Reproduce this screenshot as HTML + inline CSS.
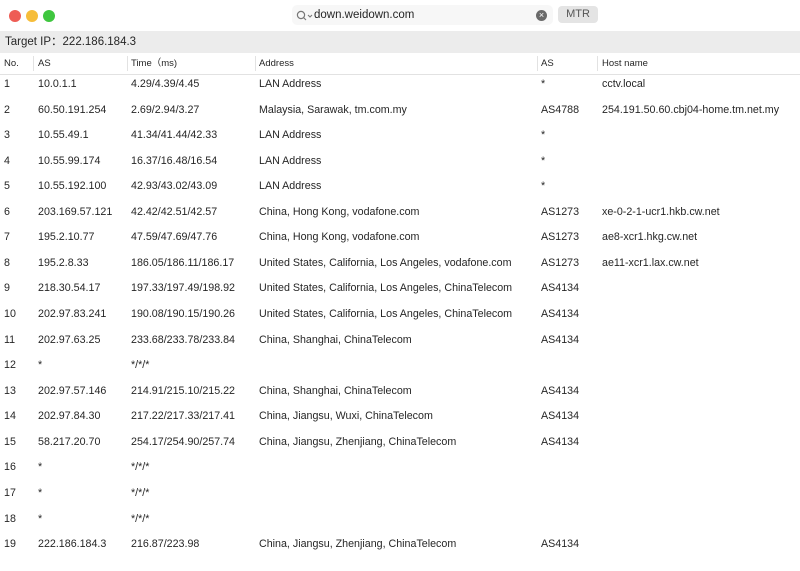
<!DOCTYPE html><html><head><style>
body{margin:0;width:800px;height:571px;background:#fff;font-family:"Liberation Sans",sans-serif;color:#262626;overflow:hidden;position:relative}
.d{position:absolute;top:10px;width:12px;height:12px;border-radius:50%}
.s{position:absolute;left:292px;top:5px;width:261px;height:20px;background:#f7f7f7;border-radius:5px;font-size:11.5px}
.m{position:absolute;left:558px;top:6px;width:40px;height:17px;background:#e4e4e4;border-radius:4px;font-size:11px;color:#555;text-align:center;line-height:17px}
.t{position:absolute;left:0;top:31px;width:800px;height:22px;background:#ececec;font-size:11.5px;line-height:22px;text-indent:5px}
.h{position:absolute;top:53px;height:21px;left:0;width:800px;border-bottom:1px solid #e2e2e2;font-size:9.5px;line-height:21px}
.h span,.r span{position:absolute;white-space:nowrap}
.h i{position:absolute;top:3px;height:15px;border-left:1px solid #e2e2e2}
.r{position:absolute;left:0;width:800px;height:25px;font-size:10.7px;line-height:20px}
</style></head><body>
<div class="d" style="left:9px;background:#ee5d55"></div>
<div class="d" style="left:26px;background:#f6bd3a"></div>
<div class="d" style="left:43px;background:#3fc63f"></div>
<div class="s"><svg style="position:absolute;left:4px;top:5px" width="18" height="12"><circle cx="5" cy="5" r="3.6" fill="none" stroke="#777" stroke-width="1.2"/><path d="M7.6 7.6 10 10M12 5l2 2 2-2" stroke="#777" fill="none" stroke-width="1.1"/></svg><span style="position:absolute;left:22px;top:4px">down.weidown.com</span><span style="position:absolute;left:244px;top:5px;width:11px;height:11px;border-radius:50%;background:#6a6a6a;color:#fff;font-size:9px;line-height:11px;text-align:center">×</span></div>
<div class="m">MTR</div>
<div class="t">Target IP：222.186.184.3</div>
<div class="h"><span style="left:4px">No.</span><i style="left:33px"></i><span style="left:38px">AS</span><i style="left:127px"></i><span style="left:131px">Time（ms)</span><i style="left:255px"></i><span style="left:259px">Address</span><i style="left:537px"></i><span style="left:541px">AS</span><i style="left:597px"></i><span style="left:602px">Host name</span></div>
<div id="rows"></div>
<script>
var d=[["1","10.0.1.1","4.29/4.39/4.45","LAN Address","*","cctv.local"],
["2","60.50.191.254","2.69/2.94/3.27","Malaysia, Sarawak, tm.com.my","AS4788","254.191.50.60.cbj04-home.tm.net.my"],
["3","10.55.49.1","41.34/41.44/42.33","LAN Address","*",""],
["4","10.55.99.174","16.37/16.48/16.54","LAN Address","*",""],
["5","10.55.192.100","42.93/43.02/43.09","LAN Address","*",""],
["6","203.169.57.121","42.42/42.51/42.57","China, Hong Kong, vodafone.com","AS1273","xe-0-2-1-ucr1.hkb.cw.net"],
["7","195.2.10.77","47.59/47.69/47.76","China, Hong Kong, vodafone.com","AS1273","ae8-xcr1.hkg.cw.net"],
["8","195.2.8.33","186.05/186.11/186.17","United States, California, Los Angeles, vodafone.com","AS1273","ae11-xcr1.lax.cw.net"],
["9","218.30.54.17","197.33/197.49/198.92","United States, California, Los Angeles, ChinaTelecom","AS4134",""],
["10","202.97.83.241","190.08/190.15/190.26","United States, California, Los Angeles, ChinaTelecom","AS4134",""],
["11","202.97.63.25","233.68/233.78/233.84","China, Shanghai, ChinaTelecom","AS4134",""],
["12","*","*/*/*","","",""],
["13","202.97.57.146","214.91/215.10/215.22","China, Shanghai, ChinaTelecom","AS4134",""],
["14","202.97.84.30","217.22/217.33/217.41","China, Jiangsu, Wuxi, ChinaTelecom","AS4134",""],
["15","58.217.20.70","254.17/254.90/257.74","China, Jiangsu, Zhenjiang, ChinaTelecom","AS4134",""],
["16","*","*/*/*","","",""],["17","*","*/*/*","","",""],["18","*","*/*/*","","",""],
["19","222.186.184.3","216.87/223.98","China, Jiangsu, Zhenjiang, ChinaTelecom","AS4134",""]];
var x=[4,38,131,259,541,602],h="";
d.forEach(function(r,i){h+='<div class="r" style="top:'+(74+i*25.56)+'px">';r.forEach(function(c,j){h+='<span style="left:'+x[j]+'px">'+c+'</span>'});h+='</div>'});
document.getElementById("rows").innerHTML=h;
</script>
</body></html>
